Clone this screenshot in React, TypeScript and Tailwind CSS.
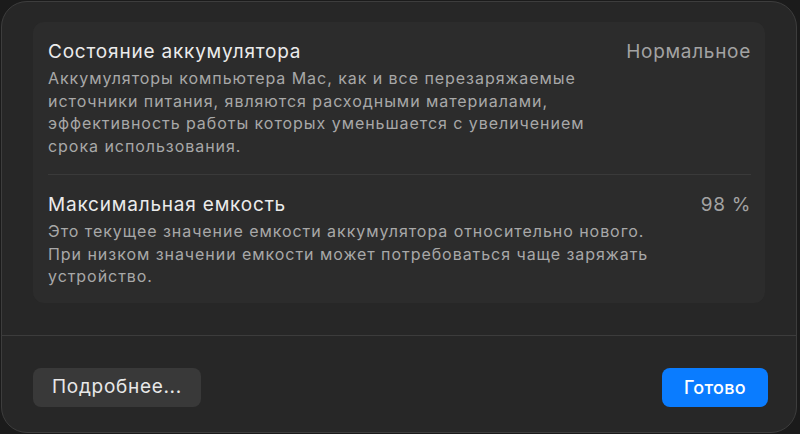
import React from 'react';

const FONT = { fontFamily: 'Inter, "Noto Sans", "Liberation Sans", sans-serif' };

const ROWS = [
    {
        title: 'Состояние аккумулятора',
        value: 'Нормальное',
        lines: [
            'Аккумуляторы компьютера Mac, как и все перезаряжаемые',
            'источники питания, являются расходными материалами,',
            'эффективность работы которых уменьшается с увеличением',
            'срока использования.',
        ],
    },
    {
        title: 'Максимальная емкость',
        value: '98 %',
        lines: [
            'Это текущее значение емкости аккумулятора относительно нового.',
            'При низком значении емкости может потребоваться чаще заряжать',
            'устройство.',
        ],
    },
];

export default function App() {
    return (
        <div className="w-[800px] h-[434px] bg-[#1b1b1b] overflow-hidden" style={FONT}>
            <div className="ml-[1px] mt-[1px] w-[796px] h-[432px] rounded-[26px] border border-[#3d3d3d] bg-[#272727] flex flex-col">
                {/* Info group */}
                <div className="mx-[31px] mt-[20px] rounded-[11px] bg-[#2c2c2c] pl-[15px] pr-[14px] pt-[18px] pb-[15px]">
                    {ROWS.map((row, i) => (
                        <div key={row.title} className={i > 0 ? 'border-t border-[#3a3a3a] mt-[17px] pt-[18px]' : ''}>
                            <div className="flex justify-between items-baseline">
                                <p className="text-[19px] leading-[24px] text-[#ebebeb] tracking-[0.8px]">{row.title}</p>
                                <p className="text-[19px] leading-[24px] text-[#a3a3a3] tracking-[0.7px]">{row.value}</p>
                            </div>
                            <div className="mt-[3px]">
                                {row.lines.map((l) => (
                                    <p key={l} className="text-[16px] leading-[22.5px] text-[#a8a8a8] tracking-[0.95px]">{l}</p>
                                ))}
                            </div>
                        </div>
                    ))}
                </div>

                <div className="flex-1" />

                {/* Footer */}
                <div className="border-t border-[#3c3c3c] pl-[31px] pr-[28px] pt-[32px] pb-[25px] flex justify-between">
                    <button className="h-[39px] w-[168px] rounded-[8px] bg-[#393939] text-[19px] tracking-[0.7px] text-[#e8e8e8]">
                        Подробнее...
                    </button>
                    <button className="h-[39px] w-[106px] rounded-[8px] bg-[#0a7cff] text-[18px] font-medium tracking-[0.3px] text-white">
                        Готово
                    </button>
                </div>
            </div>
        </div>
    );
}
